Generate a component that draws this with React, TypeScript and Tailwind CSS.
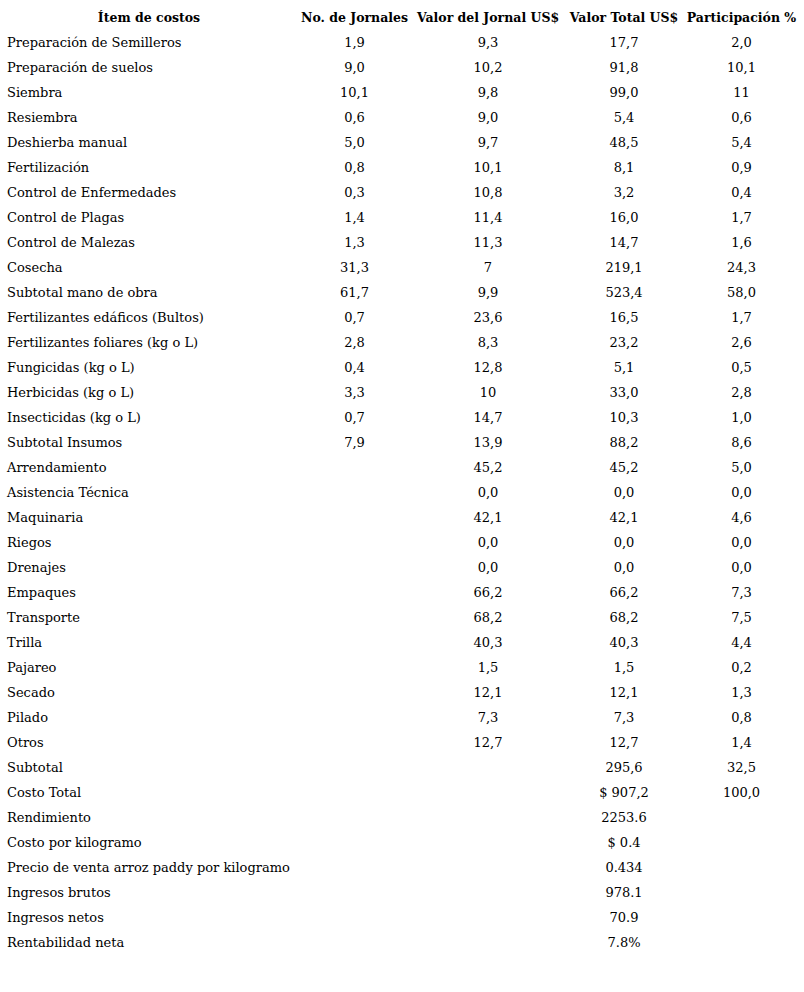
const rows: [string, string, string, string, string][] = [
  ["Preparación de Semilleros", "1,9", "9,3", "17,7", "2,0"],
  ["Preparación de suelos", "9,0", "10,2", "91,8", "10,1"],
  ["Siembra", "10,1", "9,8", "99,0", "11"],
  ["Resiembra", "0,6", "9,0", "5,4", "0,6"],
  ["Deshierba manual", "5,0", "9,7", "48,5", "5,4"],
  ["Fertilización", "0,8", "10,1", "8,1", "0,9"],
  ["Control de Enfermedades", "0,3", "10,8", "3,2", "0,4"],
  ["Control de Plagas", "1,4", "11,4", "16,0", "1,7"],
  ["Control de Malezas", "1,3", "11,3", "14,7", "1,6"],
  ["Cosecha", "31,3", "7", "219,1", "24,3"],
  ["Subtotal mano de obra", "61,7", "9,9", "523,4", "58,0"],
  ["Fertilizantes edáficos (Bultos)", "0,7", "23,6", "16,5", "1,7"],
  ["Fertilizantes foliares (kg o L)", "2,8", "8,3", "23,2", "2,6"],
  ["Fungicidas (kg o L)", "0,4", "12,8", "5,1", "0,5"],
  ["Herbicidas (kg o L)", "3,3", "10", "33,0", "2,8"],
  ["Insecticidas (kg o L)", "0,7", "14,7", "10,3", "1,0"],
  ["Subtotal Insumos", "7,9", "13,9", "88,2", "8,6"],
  ["Arrendamiento", "", "45,2", "45,2", "5,0"],
  ["Asistencia Técnica", "", "0,0", "0,0", "0,0"],
  ["Maquinaria", "", "42,1", "42,1", "4,6"],
  ["Riegos", "", "0,0", "0,0", "0,0"],
  ["Drenajes", "", "0,0", "0,0", "0,0"],
  ["Empaques", "", "66,2", "66,2", "7,3"],
  ["Transporte", "", "68,2", "68,2", "7,5"],
  ["Trilla", "", "40,3", "40,3", "4,4"],
  ["Pajareo", "", "1,5", "1,5", "0,2"],
  ["Secado", "", "12,1", "12,1", "1,3"],
  ["Pilado", "", "7,3", "7,3", "0,8"],
  ["Otros", "", "12,7", "12,7", "1,4"],
  ["Subtotal", "", "", "295,6", "32,5"],
  ["Costo Total", "", "", "$ 907,2", "100,0"],
  ["Rendimiento", "", "", "2253.6", ""],
  ["Costo por kilogramo", "", "", "$ 0.4", ""],
  ["Precio de venta arroz paddy por kilogramo", "", "", "0.434", ""],
  ["Ingresos brutos", "", "", "978.1", ""],
  ["Ingresos netos", "", "", "70.9", ""],
  ["Rentabilidad neta", "", "", "7.8%", ""],
];

export default function App() {
  return (
    <div className="w-[804px] h-[992px] bg-white text-black font-['DejaVu_Serif',serif] text-[13px]">
      <table className="table-fixed w-[800px] border-collapse mt-[5px]">
        <colgroup>
          <col className="w-[298px]" />
          <col className="w-[113px]" />
          <col className="w-[154px]" />
          <col className="w-[118px]" />
          <col className="w-[117px]" />
        </colgroup>
        <thead>
          <tr className="h-[25px] font-bold text-[12.5px]">
            <th className="text-center pt-[2px]">Ítem de costos</th>
            <th className="text-center whitespace-nowrap pt-[2px]">No. de Jornales</th>
            <th className="text-center whitespace-nowrap pt-[2px]">Valor del Jornal US$</th>
            <th className="text-center whitespace-nowrap pt-[2px]">Valor Total US$</th>
            <th className="text-center whitespace-nowrap pt-[2px]">Participación %</th>
          </tr>
        </thead>
        <tbody>
          {rows.map((r) => (
            <tr key={r[0]} className="h-[25px]">
              <td className="pl-[7px] whitespace-nowrap">{r[0]}</td>
              <td className="text-center">{r[1]}</td>
              <td className="text-center">{r[2]}</td>
              <td className="text-center">{r[3]}</td>
              <td className="text-center">{r[4]}</td>
            </tr>
          ))}
        </tbody>
      </table>
    </div>
  );
}
